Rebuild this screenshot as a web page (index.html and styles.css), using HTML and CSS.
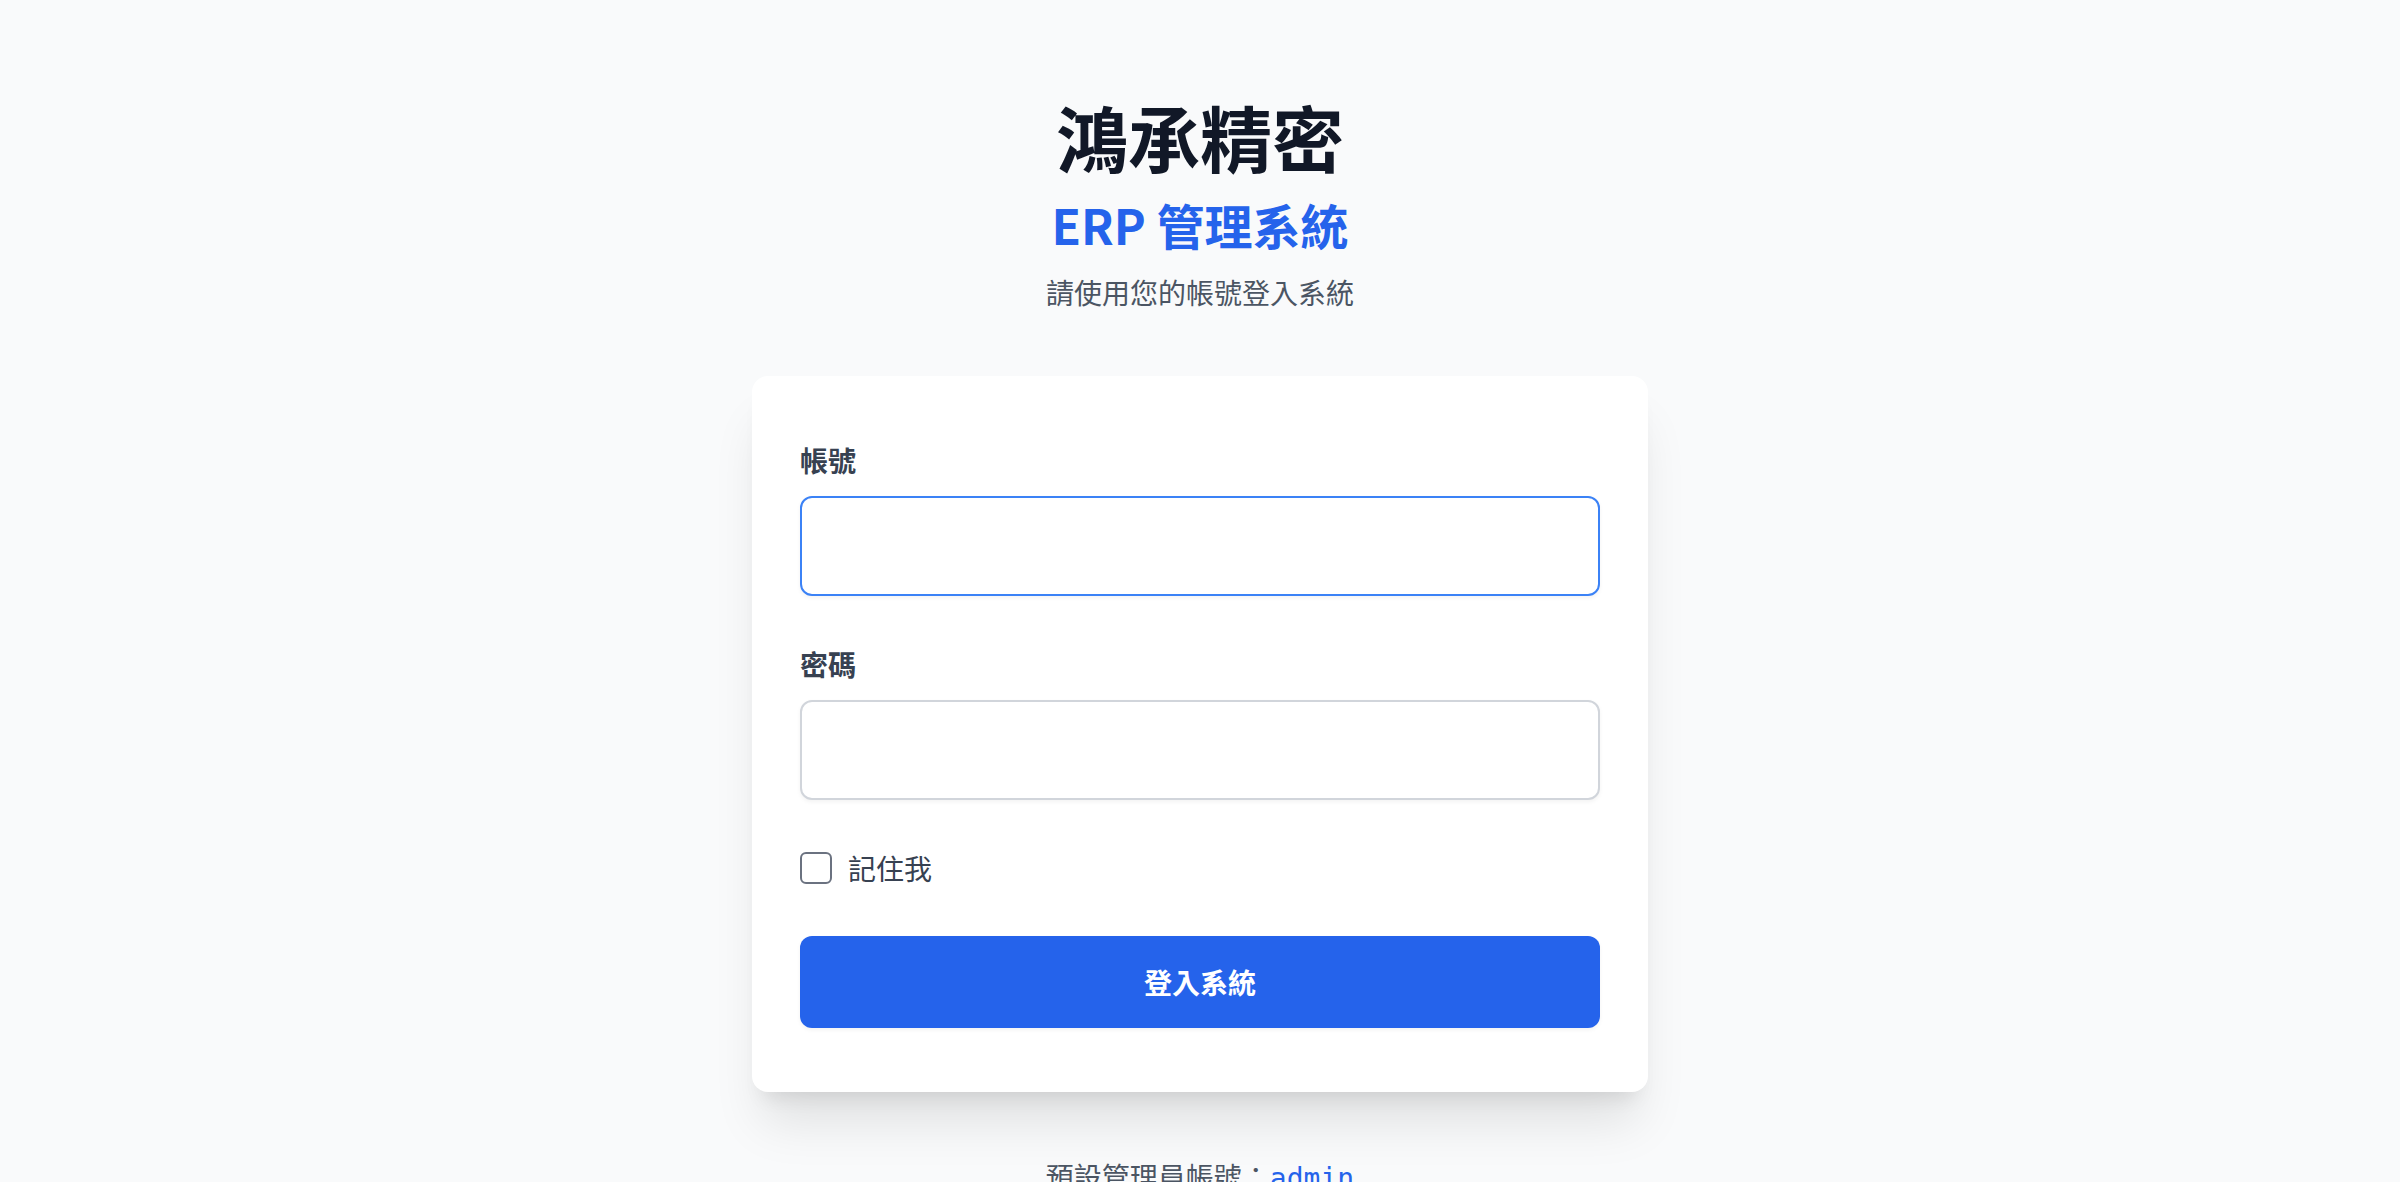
FILE: index.html
```html
<!DOCTYPE html>
<html lang="zh-Hant">
<head>
<meta charset="utf-8">
<title>鴻承精密 ERP 管理系統</title>
<link rel="stylesheet" href="styles.css">
</head>
<body>
<main class="page">
  <header class="brand">
    <h1 class="brand-title">鴻承精密</h1>
    <h2 class="brand-sub">ERP 管理系統</h2>
    <p class="brand-desc">請使用您的帳號登入系統</p>
  </header>
  <section class="card">
    <form class="form">
      <div class="field">
        <label class="label" for="username">帳號</label>
        <input class="input input-focus" id="username" type="text">
      </div>
      <div class="field">
        <label class="label" for="password">密碼</label>
        <input class="input" id="password" type="password">
      </div>
      <div class="remember">
        <input class="check" id="remember" type="checkbox">
        <label class="remember-label" for="remember">記住我</label>
      </div>
      <button class="btn" type="button">登入系統</button>
    </form>
  </section>
  <p class="hint">預設管理員帳號：<code class="hint-code">admin</code></p>
</main>
</body>
</html>
```
FILE: styles.css
```css
* { box-sizing: border-box; }
html, body { margin: 0; padding: 0; }
body {
  background: #f9fafb;
  font-family: "Noto Sans CJK TC", "Noto Sans", sans-serif;
  color: #111827;
  overflow: hidden;
}
.page {
  padding-top: 96px;
  display: flex;
  flex-direction: column;
  align-items: center;
}
.brand { text-align: center; }
.brand-title {
  margin: 0;
  font-size: 72px;
  line-height: 80px;
  font-weight: 700;
  color: #111827;
}
.brand-sub {
  margin: 16px 0 0;
  font-size: 48px;
  line-height: 64px;
  font-weight: 700;
  color: #2563eb;
}
.brand-desc {
  margin: 16px 0 0;
  font-size: 28px;
  line-height: 40px;
  color: #4b5563;
}
.card {
  margin-top: 64px;
  width: 896px;
  background: #fff;
  border-radius: 16px;
  padding: 64px 48px;
  box-shadow: 0 40px 50px -10px rgba(0,0,0,0.1), 0 16px 20px -12px rgba(0,0,0,0.1);
}
.form {
  display: flex;
  flex-direction: column;
  gap: 48px;
}
.field { display: flex; flex-direction: column; }
.label {
  font-size: 28px;
  line-height: 40px;
  font-weight: 700;
  color: #374151;
  margin-bottom: 16px;
}
.input {
  height: 100px;
  width: 100%;
  border: 2px solid #d1d5db;
  border-radius: 12px;
  background: #fff;
  padding: 0 24px;
  font-size: 28px;
  font-family: inherit;
  outline: none;
  box-shadow: 0 2px 4px rgba(0,0,0,0.05);
}
.input-focus {
  border-color: #3b82f6;
}
.remember {
  display: flex;
  align-items: center;
  height: 40px;
}
.check {
  appearance: none;
  -webkit-appearance: none;
  margin: 0;
  width: 32px;
  height: 32px;
  border: 2px solid #6b7280;
  border-radius: 6px;
  background: #fff;
}
.remember-label {
  margin-left: 16px;
  font-size: 28px;
  line-height: 40px;
  color: #374151;
}
.btn {
  height: 92px;
  width: 100%;
  border: 0;
  border-radius: 12px;
  background: #2563eb;
  color: #fff;
  font-family: inherit;
  font-size: 28px;
  font-weight: 700;
  box-shadow: 0 2px 4px rgba(0,0,0,0.05);
}
.hint {
  margin: 64px 0 0;
  font-size: 28px;
  line-height: 40px;
  color: #4b5563;
}
.hint-code {
  font-family: "DejaVu Sans Mono", monospace;
  font-size: 28px;
  color: #2563eb;
}
```
